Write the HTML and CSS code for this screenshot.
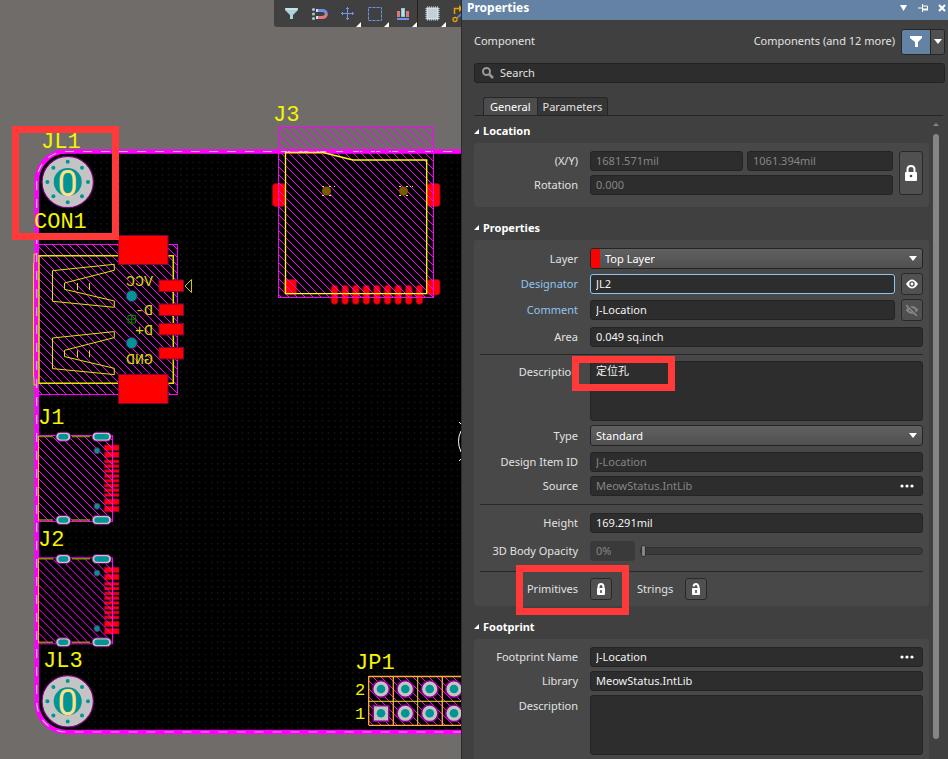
FILE: index.html
```html
<!DOCTYPE html>
<html lang="en">
<head>
<meta charset="utf-8">
<title>PCB Editor</title>
<link rel="stylesheet" href="styles.css">
</head>
<body>
<main class="workspace">
<section class="board" aria-label="Board">
<svg class="board-view" viewBox="0 0 461 759" preserveAspectRatio="xMinYMin slice">
  <defs>
    <pattern id="dots" width="6.15" height="6.15" patternUnits="userSpaceOnUse"><rect x="2" y="2" width="1" height="1" fill="#303030"/></pattern>
    <pattern id="hatch" width="8" height="8" patternUnits="userSpaceOnUse"><path d="M0 0h1v1h-1zM1 1h1v1h-1zM2 2h1v1h-1zM3 3h1v1h-1zM4 4h1v1h-1zM5 5h1v1h-1zM6 6h1v1h-1zM7 7h1v1h-1z" fill="#f0f" shape-rendering="crispEdges"/></pattern>
    <g id="hole">
      <circle r="25.7" fill="#c4c4c4" stroke="#800080" stroke-width="1.2"/>
      <circle r="14" fill="#009494"/>
      <g fill="#009494"><circle cx="20.3" r="2"/><circle cx="-20.3" r="2"/><circle cy="20.3" r="2"/><circle cy="-20.3" r="2"/><circle cx="14.3" cy="14.3" r="2"/><circle cx="-14.3" cy="14.3" r="2"/><circle cx="14.3" cy="-14.3" r="2"/><circle cx="-14.3" cy="-14.3" r="2"/></g>
      <text class="zero" y="14" text-anchor="middle">0</text>
    </g>
    <g id="wing" fill="none" stroke="#e6e600">
      <path d="M52.5 270.7 114.3 264.3V270.3L64.5 283V289.3L114.3 301V307.3L52.5 301.3ZM77.5 283V290M89.5 283V290"/>
    </g>
    <g id="slot-s"><rect x="-7.5" y="-4.5" width="15" height="9" rx="4.5" fill="#c4c4c4" stroke="#800080"/><rect x="-5" y="-2.7" width="10" height="5.4" rx="2.7" fill="#009494"/></g>
    <g id="slot-l"><rect x="-9.7" y="-4.5" width="19.4" height="9" rx="4.5" fill="#c4c4c4" stroke="#800080"/><rect x="-7.3" y="-2.7" width="14.6" height="5.4" rx="2.7" fill="#009494"/></g>
    <g id="usb">
      <path fill="red" stroke="#800040" stroke-width=".7" d="M104.5 445h14.5v5.500h-14.500zM104.500 452h14.500v5.500h-14.500zM104.500 460h14.500v3h-14.500zM104.500 464.800h14.500v3h-14.500zM104.500 469.600h14.500v3h-14.500zM104.500 474.400h14.500v3h-14.500zM104.500 479.200h14.500v3h-14.500zM104.500 484h14.500v3h-14.500zM104.500 488.800h14.500v3h-14.500zM104.500 493.600h14.500v3h-14.500zM104.500 499h14.500v5.500h-14.500zM104.500 506.200h14.500v5.500h-14.500z"/>
      <rect x="38.500" y="435.500" width="74" height="86" fill="url(#hatch)" stroke="#f0f"/>
      <path d="M38.500 436.500H53M72 436.500H90M38.500 520H53M72 520H90" stroke="#8a8a00" stroke-width="1.500"/>
      <path d="M38.500 436V521" stroke="#ffb020"/>
      <circle cx="97" cy="450.700" r="3" fill="#009494" stroke="#503070"/><circle cx="97" cy="506.300" r="3" fill="#009494" stroke="#503070"/>
      <use href="#slot-s" x="63.300" y="436.700"/><use href="#slot-l" x="101.700" y="436.700"/><use href="#slot-s" x="63.300" y="520"/><use href="#slot-l" x="101.700" y="520"/>
    </g>
    <g id="pin"><circle r="8.300" fill="#c4c4c4" stroke="#900090" stroke-width="1.500"/><circle r="4.300" fill="#009494"/></g>
    <path id="edge" d="M470 151.500H66A29.300 30 0 0 0 36.700 181.500V702A29.300 30 0 0 0 66 732H470"/>
  </defs>
  <use href="#edge" fill="#000"/><use href="#edge" fill="url(#dots)" stroke="#f0f" stroke-width="4.600"/>
  <use href="#edge" fill="none" stroke="#d0b8d0" stroke-width="1.200" stroke-dasharray="9 9"/>

  <g fill="red" stroke="#900030" stroke-width=".8">
    <rect x="272.500" y="183.500" width="13" height="23" rx="3"/><rect x="427" y="183.500" width="13" height="23" rx="3"/>
    <rect x="284" y="279.500" width="12.500" height="15" rx="2"/><rect x="427" y="279.500" width="13" height="15.500" rx="3"/>
    <rect x="331.300" y="285.300" width="6.500" height="19" rx="3"/><rect x="341.900" y="285.300" width="6.500" height="19" rx="3"/><rect x="352.500" y="285.300" width="6.500" height="19" rx="3"/><rect x="363.100" y="285.300" width="6.500" height="19" rx="3"/><rect x="373.700" y="285.300" width="6.500" height="19" rx="3"/><rect x="384.300" y="285.300" width="6.500" height="19" rx="3"/><rect x="394.900" y="285.300" width="6.500" height="19" rx="3"/><rect x="405.500" y="285.300" width="6.500" height="19" rx="3"/><rect x="416.100" y="285.300" width="6.500" height="19" rx="3"/>
  </g>
  <rect x="278.500" y="127.500" width="155" height="170" fill="url(#hatch)" stroke="#f0f"/>
  <path d="M285.500 152.500H323L353 160H426.700V293.700H285.500Z" fill="none" stroke="#ff0" stroke-width="1.300"/>
  <g fill="#7a5c00"><circle cx="326.500" cy="191" r="4.500"/><circle cx="403.500" cy="191" r="4.500"/></g>
  <g fill="#ffe08a"><path d="M322 186h2v1h-2zM329 186h2v1h-2zM322 195h2v1h-2zM329 195h2v1h-2zM399 186h2v1h-2zM406 186h2v1h-2zM399 195h2v1h-2zM406 195h2v1h-2zM334 186h1v1h-1zM410 186h1v1h-1zM412 186h1v1h-1z"/></g>

  <rect x="38.500" y="244.500" width="139" height="150" fill="url(#hatch)" stroke="#f0f"/>
  <path d="M39 255.700H173.300V383.300H39Z" fill="none" stroke="#e6e600" stroke-width="1.500"/>
  <path d="M37 254H34V262L33.500 264V376L34 378V385H37" fill="none" stroke="#ffc040"/>
  <use href="#wing"/><use href="#wing" y="67.300"/>
  <g fill="red" stroke="#800040"><rect x="118.500" y="235.500" width="49.500" height="29"/><rect x="118.500" y="374.500" width="49.500" height="29"/><rect x="159" y="280" width="24.500" height="11.500"/><rect x="159" y="304" width="24.500" height="11.500"/><rect x="159" y="323.500" width="24.500" height="11.500"/><rect x="159" y="347.500" width="24.500" height="11.500"/></g>
  <path d="M185 286 191.500 279.500V292.500Z" fill="none" stroke="#cccc00"/>
  <circle cx="131.700" cy="296" r="5.700" fill="#009494" stroke="#600060"/><circle cx="131.700" cy="343" r="5.700" fill="#009494" stroke="#600060"/>
  <path d="M126 319.300H137M131.700 314V325M128 315.500H135.500V323H128Z" fill="none" stroke="#008000"/>
  <g class="net">
    <text transform="translate(153 286) scale(-1 1)">VCC</text><text transform="translate(153 315) scale(-1 1)">D-</text><text transform="translate(153 335) scale(-1 1)">D+</text><text transform="translate(153 364) scale(-1 1)">GND</text>
  </g>

  <use href="#usb"/><use href="#usb" y="122.300"/>
  <use href="#hole" x="67.700" y="182"/><use href="#hole" x="67.700" y="701.300"/>

  <rect x="368.700" y="676.300" width="98" height="49" fill="url(#hatch)"/>
  <path d="M368.700 676.500H470M368.700 725.300H470M368.700 676V725M393.300 676V725M442.300 676V725" stroke="#ffb030" stroke-width="1.300" fill="none"/>
  <path d="M368.700 701.300H470M417.700 676V725" stroke="#e6e600" fill="none"/>
  <use href="#pin" x="381" y="689"/><use href="#pin" x="405.300" y="689"/><use href="#pin" x="429.700" y="689"/><use href="#pin" x="454" y="689"/>
  <rect x="373.300" y="705.700" width="15.500" height="15.500" fill="#c4c4c4" stroke="#900090" stroke-width="1.500"/><circle cx="381" cy="713.300" r="4.300" fill="#009494"/>
  <use href="#pin" x="405.300" y="713.300"/><use href="#pin" x="429.700" y="713.300"/><use href="#pin" x="454" y="713.300"/>

  <g class="silk">
    <text x="41" y="148">JL1</text><text x="34" y="228">CON1</text><text x="273" y="121">J3</text><text x="38" y="424">J1</text><text x="38" y="546">J2</text><text x="43" y="667">JL3</text><text x="355" y="669">JP1</text>
    <text class="small" x="355" y="695">2</text><text class="small" x="355" y="719">1</text>
  </g>
  <path d="M461 431Q456 441 461 452M459 422 461 424M459 461 461 459" fill="none" stroke="#fff"/>
  <rect x="15.500" y="129.500" width="100" height="107" fill="none" stroke="#ff3a38" stroke-width="7"/>
</svg>
<div class="toolbar" role="toolbar">
  <button aria-label="Filter"><svg viewBox="0 0 28 26"><path d="M8 7H21V9L16 14V18H13V14L8 9Z" fill="#a9d3dd"/><path d="M9 8H20" stroke="#e4f5f8"/></svg></button>
  <button aria-label="Snap"><svg viewBox="0 0 28 26"><g fill="#a9c8d0"><circle cx="8.500" cy="8.500" r="1.500"/><circle cx="8.500" cy="13" r="1.500"/><circle cx="8.500" cy="17.500" r="1.500"/></g><path d="M12 9.500H17Q21 9.500 21.500 13" fill="none" stroke="#6b93e0" stroke-width="3"/><path d="M12 16.500H17Q21 16.500 21.500 13" fill="none" stroke="#e07a80" stroke-width="3"/><path d="M11 9.500h2M11 16.500h2" stroke="#dde" stroke-width="3"/></svg></button>
  <button aria-label="Place"><svg viewBox="0 0 28 26"><path d="M8 12.500H21M14.500 6V19M13 7.500H16M13 17.500H16M9.500 11V14M19.500 11V14" stroke="#6f93e8"/><path d="M28 21V26H23Z" fill="#fff"/></svg></button>
  <button aria-label="Select"><svg viewBox="0 0 28 26"><rect x="7.500" y="6.500" width="13" height="13" fill="none" stroke="#6f93e8" stroke-dasharray="3 1"/><path d="M28 21V26H23Z" fill="#fff"/></svg></button>
  <button aria-label="Align"><svg viewBox="0 0 28 26"><path d="M8 10H11V16H8ZM17 10H20V16H17Z" fill="#dd7777"/><path d="M12 7H16V16H12Z" fill="#8fc3d5"/><path d="M14 8V15" stroke="#e8f8ff"/><path d="M8 18H20" stroke="#6f93e8" stroke-width="2"/><path d="M28 21V26H23Z" fill="#fff"/></svg></button>
  <button class="split" aria-label="Component"><svg viewBox="0 0 28 26"><path d="M9.500 5V20M11.500 5V20M13.500 5V20M15.500 5V20M17.500 5V20M19.500 5V20M7 7.500H22M7 9.500H22M7 11.500H22M7 13.500H22M7 15.500H22M7 17.500H22" stroke="#7f9da6"/><rect x="9" y="7" width="11" height="11" fill="#c5cfd5" stroke="#e7eef0"/><path d="M28 21V26H23Z" fill="#fff"/></svg></button>
  <button aria-label="Route"><svg viewBox="0 0 28 26"><path d="M8.500 13V7.500H15" fill="none" stroke="#e6a000" stroke-width="1.500"/><path d="M13 4 17 7.500 13 11Z" fill="#e6a000"/><path d="M11 17 18 11" stroke="#5f7fae" stroke-width="2"/><circle cx="9" cy="18.500" r="2" fill="none" stroke="#e6a000" stroke-width="1.300"/></svg></button>
</div>
</section>

<aside class="panel">
  <header class="titlebar">
    <h1>Properties</h1>
    <button aria-label="Menu"><svg width="8" height="6"><path d="M0 0H7L3.500 6Z" fill="#fff"/></svg></button>
    <button aria-label="Pin"><svg width="10" height="8"><path d="M0 4H4M4.500 0V8M5 2H9.500V6" fill="none" stroke="#fff"/><path d="M5 5.500H10" stroke="#fff" stroke-width="2"/></svg></button>
    <button aria-label="Close"><svg width="8" height="8"><path d="M1 1 7 7M7 1 1 7" stroke="#fff" stroke-width="2"/></svg></button>
  </header>
  <div class="scope">
    <span class="scope-text">Component</span>
    <span class="scope-text scope-more">Components (and 12 more)</span>
    <span class="filter"><button class="filter-main" aria-label="Filter"><svg width="13" height="12"><path d="M0 0H12V2L8 6V11H5V6L0 2Z" fill="#fff"/></svg></button><button class="filter-drop" aria-label="Filter options"><svg width="8" height="5"><path d="M0 0H8L4 5Z" fill="#fff"/></svg></button></span>
  </div>
  <label class="search"><svg width="12" height="12"><circle cx="4.500" cy="4.500" r="3.500" fill="none" stroke="#999" stroke-width="2"/><path d="M7 7 11 11" stroke="#999" stroke-width="2.500"/></svg><input type="text" placeholder="Search" aria-label="Search"></label>
  <nav class="tabs"><button class="tab active">General</button><button class="tab">Parameters</button></nav>

  <div class="content">
  <div class="sections">
    <h2><svg width="5" height="5"><path d="M5 0V5H0Z" fill="#fff"/></svg>Location</h2>
    <div class="group location">
      <div class="coords">
        <div class="row"><label for="px">(X/Y)</label><div class="pair"><input id="px" class="dim" value="1681.571mil"><input class="dim" aria-label="Y" value="1061.394mil"></div></div>
        <div class="row"><label for="rot">Rotation</label><input id="rot" class="dim" value="0.000"></div>
      </div>
      <button class="btn lock-tall" aria-label="Lock position"><svg width="12" height="16" viewBox="0 0 12 16"><path d="M2.500 8V4.500Q2.500 1 6 1T9.500 4.500V8" fill="none" stroke="#fff" stroke-width="2"/><rect y="7" width="12" height="9" rx="1" fill="#fff"/><circle cx="6" cy="11" r="1.300" fill="#444"/></svg></button>
    </div>

    <h2><svg width="5" height="5"><path d="M5 0V5H0Z" fill="#fff"/></svg>Properties</h2>
    <div class="group">
      <div class="row"><label for="layer">Layer</label><div class="select layer"><select id="layer"><option>Top Layer</option></select><svg width="8" height="5"><path d="M0 0H8L4 5Z" fill="#fff"/></svg></div></div>
      <div class="row"><label for="des" class="linked">Designator</label><div class="with-btn"><input id="des" class="focused" value="JL2"><button class="btn" aria-label="Show designator"><svg width="12" height="10"><path d="M0 5Q6-4 12 5Q6 14 0 5Z" fill="#fff"/><circle cx="6" cy="5" r="2.700" fill="#505050"/><circle cx="6" cy="5" r="1.400" fill="#fff"/></svg></button></div></div>
      <div class="row"><label for="com" class="linked">Comment</label><div class="with-btn"><input id="com" value="J-Location"><button class="btn" aria-label="Show comment"><svg width="12" height="12"><path d="M1 6Q6 0 11 6Q6 12 1 6Z" fill="none" stroke="#858585" stroke-width="2"/><path d="M1 1 11 11" stroke="#505050" stroke-width="3"/><path d="M0 1 11 12" stroke="#8c8c8c" stroke-width="1.500"/></svg></button></div></div>
      <div class="row spaced"><label for="area">Area</label><input id="area" value="0.049 sq.inch"></div>
      <hr>
      <div class="row top"><label for="desc">Description</label><textarea id="desc" lang="zh">定位孔</textarea><span class="mark mark-desc"></span></div>
      <div class="row"><label for="type">Type</label><div class="select"><select id="type"><option>Standard</option></select><svg width="8" height="5"><path d="M0 0H8L4 5Z" fill="#fff"/></svg></div></div>
      <div class="row spaced"><label for="item">Design Item ID</label><input id="item" class="dim" value="J-Location"></div>
      <div class="row"><label for="src">Source</label><div class="browse"><input id="src" class="dim" value="MeowStatus.IntLib"><button aria-label="Browse source"><svg width="14" height="4"><g fill="#fff"><circle cx="2" cy="2" r="1.600"/><circle cx="7" cy="2" r="1.600"/><circle cx="12" cy="2" r="1.600"/></g></svg></button></div></div>
      <hr class="wide">
      <div class="row"><label for="hgt">Height</label><input id="hgt" value="169.291mil"></div>
      <div class="row loose"><label for="op">3D Body Opacity</label><div class="opacity"><input id="op" class="off" value="0%"><input type="range" aria-label="Opacity" min="0" max="100" value="0"></div></div>
      <hr class="wide last">
      <div class="row"><span class="label">Primitives</span><div class="locks"><button class="btn" aria-label="Lock primitives"><svg width="10" height="12"><path d="M2.500 6V4Q2.500 1 5 1T7.500 4V6" fill="none" stroke="#fff" stroke-width="2"/><rect x="1" y="5" width="8" height="7" rx="1" fill="#fff"/><path d="M5 7V10" stroke="#444" stroke-width="1.500"/></svg></button><span class="strings">Strings</span><button class="btn" aria-label="Unlock strings"><svg width="10" height="12"><path d="M2.500 3.500Q3 1 5 1T7.500 4V6" fill="none" stroke="#fff" stroke-width="2"/><rect x="1" y="5" width="8" height="7" rx="1" fill="#fff"/><path d="M5 7V10" stroke="#444" stroke-width="1.500"/></svg></button></div><span class="mark mark-prim"></span></div>
    </div>

    <h2><svg width="5" height="5"><path d="M5 0V5H0Z" fill="#fff"/></svg>Footprint</h2>
    <div class="group">
      <div class="row"><label for="fp">Footprint Name</label><div class="browse"><input id="fp" value="J-Location"><button aria-label="Browse footprint"><svg width="14" height="4"><g fill="#fff"><circle cx="2" cy="2" r="1.600"/><circle cx="7" cy="2" r="1.600"/><circle cx="12" cy="2" r="1.600"/></g></svg></button></div></div>
      <div class="row"><label for="lib">Library</label><input id="lib" value="MeowStatus.IntLib"></div>
      <div class="row top"><label for="fdesc">Description</label><textarea id="fdesc"></textarea></div>
    </div>
  </div>
  <div class="scroll"><svg width="6" height="4"><path d="M0 3 3 0 6 3Z" fill="#888"/></svg><span class="thumb"></span></div>
  </div>
</aside>
</main>
</body>
</html>
```
FILE: styles.css
```css
* { box-sizing: border-box; }
body { margin: 0; background: #404040; color: #e2e2e2; font: 11px/16px "Noto Sans", "Noto Sans CJK SC", sans-serif; }
button, input, select, textarea { font: inherit; color: inherit; margin: 0; }
button { padding: 0; border: 0; background: none; display: flex; align-items: center; justify-content: center; }
svg { display: block; flex: none; }

.workspace { display: grid; grid-template-columns: minmax(0, 461fr) minmax(0, 487fr); height: 100vh; overflow: hidden; }
.board { position: relative; overflow: hidden; background: #706c6a; }
.board-view { width: 100%; height: 100%; }
.silk { fill: #f4f400; font: 22px "Liberation Mono", monospace; }
.silk .small { font-size: 17px; }
.net { fill: #d8d800; font: 15px "Liberation Mono", monospace; }
.zero { fill: #ffe08a; font: 36px Roboto, sans-serif; }

.toolbar { position: absolute; top: 0; left: 274px; right: 0; height: 27px; padding-left: 3px; display: flex; overflow: hidden; background: #404040; border-bottom-left-radius: 3px; }
.toolbar button { flex: 0 0 28px; }
.toolbar svg { width: 28px; height: 26px; }
.toolbar .split { border-left: 1px solid #222; }

.panel { display: flex; flex-direction: column; min-width: 0; background: #404040; border-left: 1px solid #2b2b2b; overflow: hidden; }
.titlebar { flex: none; display: flex; align-items: center; gap: 10px; height: 20px; padding: 0 2px 4px 5px; background: #6483a4; color: #fff; }
.titlebar h1 { flex: 1; margin: 0; font-size: 12px; font-weight: 700; }
.scope { flex: none; display: flex; align-items: center; height: 43px; padding: 0 3px 0 12px; }
.scope-text { padding-bottom: 2px; }
.scope-more { margin-left: auto; margin-right: 6px; }
.filter { display: flex; height: 26px; border: 1px solid #262626; border-radius: 3px; overflow: hidden; }
.filter-main { width: 28px; background: #6483a4; }
.filter-drop { width: 14px; background: #505050; border-left: 1px solid #262626; }
.search { flex: none; display: flex; align-items: center; gap: 6px; height: 20px; margin: 0 3px 0 12px; padding-left: 7px; background: #2d2d2d; border: 1px solid #222; border-radius: 3px; }
.search input { flex: 1; min-width: 0; height: 18px; padding: 0 0 2px; border: 0; background: none; outline: 0; }
.search input::placeholder { color: #e2e2e2; opacity: 1; }
.tabs { flex: none; display: flex; margin: 14px 5px 0 12px; padding-left: 9px; border-bottom: 1px solid #262626; }
.tab { height: 18px; padding: 0 5px; border: 1px solid #262626; border-bottom: 0; border-left: 0; background: #363636; }
.tab:first-child { padding: 0 6px; border-left: 1px solid #262626; border-radius: 3px 0 0 0; }
.tab:last-child { border-radius: 0 3px 0 0; }
.tab.active { background: #4c4c4c; color: #fff; }

.content { flex: 1; min-height: 0; display: flex; padding-left: 12px; overflow: hidden; }
.sections { flex: 1; min-width: 0; }
h2 { display: flex; align-items: center; gap: 4px; margin: 0; height: 33px; padding-top: 8px; font-size: 11px; font-weight: 700; color: #fff; }
h2:first-child { height: 27px; padding-top: 3px; }
.group { display: flex; flex-direction: column; gap: 4px; padding: 8px 6px 6px 0; background: #484848; border-radius: 4px; }
.row { position: relative; display: grid; grid-template-columns: 104px minmax(0, 1fr); column-gap: 12px; align-items: center; }
.row > label, .row > .label { text-align: right; }
.row .linked { color: #8fc4f0; }
.spaced { margin-top: 2px; }
.loose { margin-top: 4px; }
.top { align-items: start; }
.top > label { padding-top: 3px; }
.row input:not([type="range"]), textarea { width: 100%; min-width: 0; height: 20px; padding: 0 5px 2px; color: #f2f2f2; background: #2d2d2d; border: 1px solid #242424; border-radius: 3px; outline: 0; }
textarea { display: block; resize: none; }
.row textarea { height: 60px; padding-top: 1px; }
.row input.dim { color: #858585; }
.row input.focused { border-color: #8fc4f0; }
.row input.off { width: 45px; flex: none; color: #858585; background: #3a3a3a; border-color: #3a3a3a; }
.location { flex-direction: row; gap: 6px; padding-bottom: 12px; }
.coords { flex: 1; display: flex; flex-direction: column; gap: 4px; min-width: 0; }
.pair { display: grid; grid-template-columns: 153fr 146fr; gap: 4px; }
.btn { flex: none; width: 22px; height: 22px; background: #505050; border: 1px solid #282828; border-radius: 3px; }
.lock-tall { width: 24px; height: 44px; }
.with-btn { display: flex; align-items: center; gap: 6px; }
.select { position: relative; height: 21px; background: linear-gradient(#606060, #505050); border: 1px solid #242424; border-radius: 3px; }
.select select { appearance: none; display: block; width: 100%; height: 19px; padding: 0 5px; border: 0; background: none; color: #fff; outline: 0; }
.select svg { position: absolute; right: 5px; top: 7px; pointer-events: none; }
.select.layer select { border-left: 9px solid red; border-radius: 3px 0 0 3px; }
.browse { position: relative; }
.browse input { display: block; }
.browse button { position: absolute; right: 6px; top: 0; width: 20px; height: 20px; }
hr { width: calc(100% - 6px); height: 1px; margin: 3px 0 2px 6px; border: 0; background: #282828; }
hr.wide { margin-top: 4px; margin-bottom: 4px; }
hr.last { margin-top: 6px; margin-bottom: 2px; }
.opacity { display: flex; align-items: center; gap: 5px; }
.opacity input[type="range"] { appearance: none; flex: 1; min-width: 0; height: 8px; margin: 0; background: #3a3a3a; border: 1px solid #303030; border-radius: 4px; }
input[type="range"]::-webkit-slider-thumb { appearance: none; width: 5px; height: 12px; background: #858585; border: 1px solid #303030; border-radius: 2px; }
.locks { display: flex; align-items: center; }
.strings { margin: 0 12px 0 25px; }
.mark { position: absolute; border: 7px solid #ff3a38; pointer-events: none; }
.mark-desc { left: 98px; top: -5px; width: 103px; height: 35px; }
.mark-prim { left: 42px; top: -13px; width: 113px; height: 50px; }
.scroll { flex: none; width: 19px; padding: 7px 0 20px 4px; display: flex; flex-direction: column; gap: 7px; }
.thumb { flex: 1; width: 6px; background: #858585; border-radius: 3px; }
```
